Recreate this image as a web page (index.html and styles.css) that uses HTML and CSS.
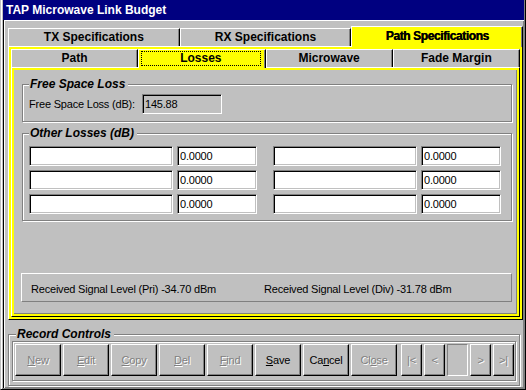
FILE: index.html
```html
<!DOCTYPE html>
<html lang="en">
<head>
    <meta charset="UTF-8">
    <title>TAP Microwave Link Budget</title>
    <link rel="stylesheet" href="styles.css">
</head>
<body>
    <div class="window">
        <div class="titlebar">TAP Microwave Link Budget</div>
        <div class="client">
            <!-- top level tabs -->
            <div class="tabs">
                <div class="tab">TX Specifications</div>
                <div class="tab">RX Specifications</div>
                <div class="tab active heavy">Path Specifications</div>
            </div>
            <div class="page outer-page">
                <div class="tabs">
                    <div class="tab">Path</div>
                    <div class="tab active"><span class="focus">Losses</span></div>
                    <div class="tab">Microwave</div>
                    <div class="tab">Fade Margin</div>
                </div>
                <div class="page inner-page">
                    <fieldset class="group fsl-group">
                        <legend>Free Space Loss</legend>
                        <div class="fsl-row">
                            <label class="fsl-label">Free Space Loss (dB):</label>
                            <input class="field readonly" type="text" value="145.88" readonly>
                        </div>
                    </fieldset>

                    <fieldset class="group other-group">
                        <legend>Other Losses (dB)</legend>
                        <div class="loss-rows">
                            <div class="loss-row">
                                <div class="loss-pair"><input class="field name" type="text" value=""><input class="field value" type="text" value="0.0000"></div>
                                <div class="loss-pair"><input class="field name" type="text" value=""><input class="field value" type="text" value="0.0000"></div>
                            </div>
                            <div class="loss-row">
                                <div class="loss-pair"><input class="field name" type="text" value=""><input class="field value" type="text" value="0.0000"></div>
                                <div class="loss-pair"><input class="field name" type="text" value=""><input class="field value" type="text" value="0.0000"></div>
                            </div>
                            <div class="loss-row">
                                <div class="loss-pair"><input class="field name" type="text" value=""><input class="field value" type="text" value="0.0000"></div>
                                <div class="loss-pair"><input class="field name" type="text" value=""><input class="field value" type="text" value="0.0000"></div>
                            </div>
                        </div>
                    </fieldset>

                    <div class="signal-panel">
                        <span class="signal-pri">Received Signal Level (Pri) -34.70 dBm</span>
                        <span>Received Signal Level (Div) -31.78 dBm</span>
                    </div>
                </div>
            </div>

            <!-- record navigator -->
            <fieldset class="group record-group">
                <legend>Record Controls</legend>
                <div class="nav-panel">
                    <button class="nav-btn" disabled><u>N</u>ew</button>
                    <button class="nav-btn" disabled><u>E</u>dit</button>
                    <button class="nav-btn" disabled><u>C</u>opy</button>
                    <button class="nav-btn" disabled><u>D</u>el</button>
                    <button class="nav-btn" disabled><u>F</u>ind</button>
                    <button class="nav-btn"><u>S</u>ave</button>
                    <button class="nav-btn">Ca<u>n</u>cel</button>
                    <button class="nav-btn" disabled>Cl<u>o</u>se</button>
                    <button class="nav-btn small gap" disabled>|&lt;</button>
                    <button class="nav-btn small" disabled>&lt;</button>
                    <span class="nav-pos"></span>
                    <button class="nav-btn small" disabled>&gt;</button>
                    <button class="nav-btn small" disabled>&gt;|</button>
                </div>
            </fieldset>
        </div>
    </div>
</body>
</html>
```

FILE: styles.css
```css
body {
    margin: 0;
    font-family: "Liberation Sans", Arial, sans-serif;
    font-size: 11px;
    letter-spacing: -0.2px;
    background: #c0c0c0;
    color: #000;
}
.window {
    box-sizing: border-box;
    width: 526px;
    height: 390px;
    display: flex;
    flex-direction: column;
    background: #c0c0c0;
    border-left: 1px solid #c0c0c0;
    border-right: 1px solid #000;
    border-bottom: 1px solid #000;
    padding: 0 1px 1px 2px;
    box-shadow: inset 1px 0 #fff, inset -1px -1px #808080;
}
.titlebar {
    height: 20px;
    line-height: 21px;
    padding-left: 3px;
    background: #000080;
    color: #fff;
    font-weight: bold;
    font-size: 12px;
    letter-spacing: 0;
    overflow: hidden;
}
.client {
    flex: 1;
    display: flex;
    flex-direction: column;
    border-left: 1px solid #000;
    box-shadow: inset 1px 1px #fff, inset -1px -1px #808080;
    padding: 6px 1px 2px 4px;
}

/* tabs */
.tabs {
    display: flex;
    align-items: flex-end;
}
.tab {
    flex: 1;
    box-sizing: border-box;
    height: 18px;
    border-top: 1px solid #fff;
    border-left: 1px solid #fff;
    border-right: 1px solid #000;
    box-shadow: inset -1px 0 #808080;
    text-align: center;
    font-weight: bold;
    font-size: 12px;
    letter-spacing: 0;
    line-height: 17px;
}
.tab.active {
    height: 21px;
    margin-bottom: -1px;
    line-height: 19px;
    background: #ff0;
    position: relative;
    z-index: 1;
}
.outer-page .tab.active {
    height: 19px;
    line-height: 17px;
}
.tab.heavy {
    letter-spacing: -0.4px;
    text-shadow: 0.4px 0 #000;
}
.focus {
    display: block;
    margin: 1px 4px 2px 2px;
    border: 1px dotted #000;
    line-height: 13px;
}

/* tab pages */
.page {
    box-sizing: border-box;
    border: 1px solid;
    border-color: #fff #000 #000 #fff;
    box-shadow: inset 0 0 0 2px #ff0;
}
.outer-page {
    height: 274px;
    padding: 2px;
}
.inner-page {
    height: 250px;
    padding: 9px 7px 0 10px;
    box-shadow: inset 0 0 0 2px #ff0, inset -3px -3px #808080;
    overflow: hidden;
}

/* group boxes */
.group {
    margin: 0;
    min-width: 0;
    border: 1px solid #808080;
    box-shadow: inset 1px 1px #fff, 1px 1px #fff;
}
.group legend {
    padding: 0 3px 0 1px;
    background: #c0c0c0;
    font-weight: bold;
    font-style: italic;
    font-size: 12px;
    letter-spacing: 0;
    line-height: 14px;
}
.fsl-group {
    padding: 3px 6px 7px;
}
.other-group {
    margin-top: 4px;
    padding: 6px 6px 6px;
}
.fsl-row {
    display: flex;
    align-items: center;
}
.fsl-label {
    width: 113px;
}
.field {
    box-sizing: border-box;
    height: 20px;
    margin: 0;
    padding: 0 2px;
    border: 1px solid;
    border-color: #808080 #fff #fff #808080;
    box-shadow: inset 1px 1px #000, inset -1px -1px #c0c0c0;
    background: #fff;
    font-family: "Liberation Sans", Arial, sans-serif;
    font-size: 11px;
    letter-spacing: -0.2px;
    color: #000;
    outline: none;
}
.field.readonly {
    width: 80px;
    background: #c0c0c0;
}
.field.name {
    width: 144px;
}
.field.value {
    width: 80px;
}
.loss-rows {
    display: flex;
    flex-direction: column;
    gap: 4px;
}
.loss-row {
    display: flex;
    gap: 16px;
}
.loss-pair {
    display: flex;
    gap: 4px;
}
.signal-panel {
    display: flex;
    align-items: center;
    height: 29px;
    box-sizing: border-box;
    margin: 52px 0 0 -1px;
    padding: 2px 0 0 9px;
    border: 1px solid;
    border-color: #fff #808080 #808080 #fff;
}
.signal-pri {
    width: 233px;
}

/* record controls */
.record-group {
    margin: 7px 3px 0 0;
    padding: 0 3px 4px 3px;
}
.record-group legend {
    margin-left: 4px;
    padding: 0 3px 0 1px;
}
.nav-panel {
    display: flex;
    gap: 2px;
    padding: 2px 1px 4px 2px;
    border: 1px solid #808080;
    box-shadow: inset 1px 1px #fff, 1px 1px #fff;
}
.nav-btn {
    box-sizing: border-box;
    width: 46px;
    height: 32px;
    margin: 0;
    padding: 0;
    border: 1px solid;
    border-color: #fff #000 #000 #fff;
    box-shadow: inset -1px -1px #808080;
    background: #c0c0c0;
    font-family: "Liberation Sans", Arial, sans-serif;
    font-size: 11px;
    letter-spacing: -0.2px;
    color: #000;
}
.nav-btn:disabled {
    color: #808080;
    text-shadow: 1px 1px #fff;
}
.nav-btn.small {
    width: 21px;
}
.nav-btn.gap {
    margin-left: 2px;
}
.nav-pos {
    box-sizing: border-box;
    width: 21px;
    height: 32px;
    border: 1px solid;
    border-color: #808080 #fff #fff #808080;
}
```
